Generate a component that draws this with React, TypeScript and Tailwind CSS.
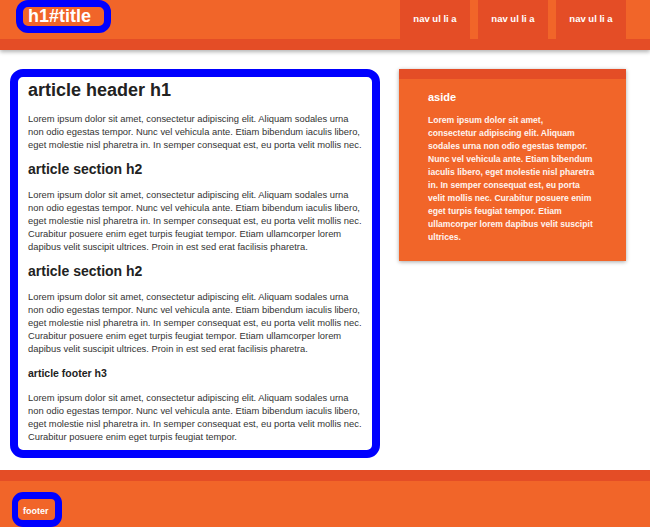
const P1 = [
  "Lorem ipsum dolor sit amet, consectetur adipiscing elit. Aliquam sodales urna",
  "non odio egestas tempor. Nunc vel vehicula ante. Etiam bibendum iaculis libero,",
  "eget molestie nisl pharetra in. In semper consequat est, eu porta velit mollis nec.",
];

const P2 = [
  ...P1,
  "Curabitur posuere enim eget turpis feugiat tempor. Etiam ullamcorper lorem",
  "dapibus velit suscipit ultrices. Proin in est sed erat facilisis pharetra.",
];

const P4 = [...P1, "Curabitur posuere enim eget turpis feugiat tempor."];

const ASIDE = [
  "Lorem ipsum dolor sit amet,",
  "consectetur adipiscing elit. Aliquam",
  "sodales urna non odio egestas tempor.",
  "Nunc vel vehicula ante. Etiam bibendum",
  "iaculis libero, eget molestie nisl pharetra",
  "in. In semper consequat est, eu porta",
  "velit mollis nec. Curabitur posuere enim",
  "eget turpis feugiat tempor. Etiam",
  "ullamcorper lorem dapibus velit suscipit",
  "ultrices.",
];

function Lines({ lines, className }: { lines: string[]; className: string }) {
  return (
    <p className={`whitespace-nowrap ${className}`}>
      {lines.map((l, i) => (
        <span key={i}>
          {l}
          {i < lines.length - 1 && <br />}
        </span>
      ))}
    </p>
  );
}

const body = "text-[9.4px] leading-[13px] text-[#333]";

export default function App() {
  return (
    <div className="h-[527px] w-[650px] overflow-hidden bg-white font-['Liberation_Sans',Arial,sans-serif]">
      <header className="relative z-10 flex h-[50px] items-start justify-between border-b-[11px] border-[#e44d26] bg-[#f16529] shadow-[0_2px_4px_rgba(0,0,0,0.3)]">
        <h1 className="ml-[16px] h-[33px] w-[95px] rounded-[12px] border-[7px] border-[#0000ff] pl-[5px] text-[18px] font-bold leading-[19px] text-white">
          h1#title
        </h1>
        <nav className="mr-[24px]">
          <ul className="flex gap-[8px]">
            {[0, 1, 2].map((i) => (
              <li key={i}>
                <a className="flex h-[39px] w-[70px] items-center justify-center bg-[#e44d26] text-[9.5px] font-bold text-white">
                  nav ul li a
                </a>
              </li>
            ))}
          </ul>
        </nav>
      </header>

      <main className="flex items-start">
        <article className="ml-[10px] mt-[19px] h-[389px] w-[370px] rounded-[13px] border-[8px] border-[#0000ff] bg-white pl-[10px] pt-[3px] text-[#222]">
          <h1 className="text-[18px] font-bold leading-[21px]">article header h1</h1>
          <Lines lines={P1} className={`mt-[11px] ${body}`} />
          <h2 className="mt-[10px] text-[14px] font-bold leading-[17px]">article section h2</h2>
          <Lines lines={P2} className={`mt-[10px] ${body}`} />
          <h2 className="mt-[10px] text-[14px] font-bold leading-[17px]">article section h2</h2>
          <Lines lines={P2} className={`mt-[10px] ${body}`} />
          <h3 className="mt-[12px] text-[10.5px] font-bold leading-[13px]">article footer h3</h3>
          <Lines lines={P4} className={`mt-[11px] ${body}`} />
        </article>

        <aside className="ml-[19px] mt-[19px] h-[192px] w-[227px] border-t-[10px] border-[#e44d26] bg-[#f16529] pl-[29px] pt-[12px] text-white shadow-[0_1px_4px_rgba(0,0,0,0.35)]">
          <h3 className="text-[11px] font-bold leading-[13px]">aside</h3>
          <Lines lines={ASIDE} className="mt-[10px] text-[8.6px] font-bold leading-[13px] text-[#fff4f0]" />
        </aside>
      </main>

      <footer className="mt-[12px] h-[57px] border-t-[11px] border-[#e44d26] bg-[#f16529] pl-[12px] pt-[11px]">
        <div className="h-[35px] w-[50px] rounded-[11px] border-[7px] border-l-[6px] border-[#0000ff] pl-[5px] pt-[5px] text-[9px] font-bold leading-[15px] text-white">
          footer
        </div>
      </footer>
    </div>
  );
}
